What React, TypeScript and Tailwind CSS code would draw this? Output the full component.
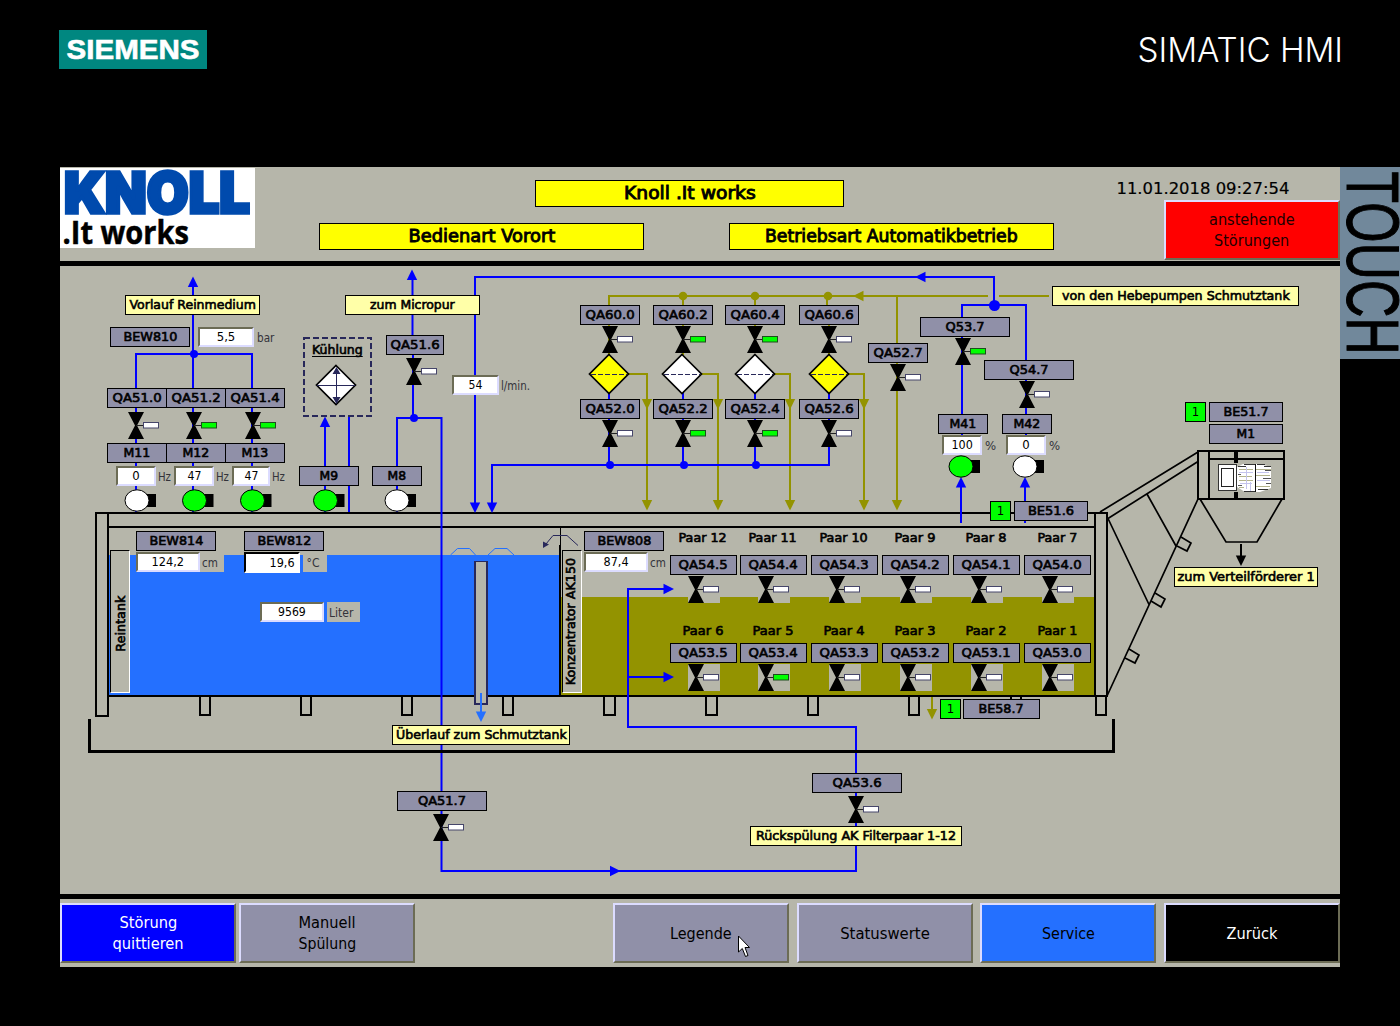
import { useLayoutEffect, useRef, useState, type ReactNode } from 'react';

const OX = 60;
const OY = 266;
const BLUE = '#0000ff';
const OLIVE = '#939300';
const NAVY = '#28285a';
const GREEN = '#00ff00';
const GREY = '#b6b6aa';

/** Text squeezed or stretched horizontally to a given width. */
function Fit({ w, children, className = '' }: { w?: number; children: string; className?: string }) {
  const ref = useRef<HTMLSpanElement>(null);
  const [k, setK] = useState(1);
  useLayoutEffect(() => {
    if (w && ref.current && ref.current.offsetWidth) setK(w / ref.current.offsetWidth);
  }, [w]);
  return (
    <span ref={ref} className={`inline-block shrink-0 whitespace-nowrap ${className}`} style={{ transform: `scaleX(${k})` }}>
      {children}
    </span>
  );
}

function At({ x, y, w, h, className = '', children }: { x: number; y: number; w: number; h: number; className?: string; children?: ReactNode }) {
  return (
    <div className={`absolute flex items-center justify-center ${className}`} style={{ left: x - OX, top: y - OY, width: w, height: h }}>
      {children}
    </div>
  );
}

type Box = [text: string, x: number, y: number, w: number, textWidth: number];

const TAGS: Box[] = [
  ['BEW810', 110, 327, 80, 54],
  ['QA51.0', 107, 388, 60, 49], ['QA51.2', 166, 388, 60, 49], ['QA51.4', 225, 388, 60, 49],
  ['M11', 107, 443, 60, 27], ['M12', 166, 443, 60, 27], ['M13', 225, 443, 60, 27],
  ['M9', 299, 466, 60, 19], ['QA51.6', 386, 335, 58, 49], ['M8', 372, 466, 50, 19],
  ['QA60.0', 580, 305, 60, 49], ['QA60.2', 653, 305, 60, 49], ['QA60.4', 725, 305, 60, 49], ['QA60.6', 799, 305, 60, 49],
  ['QA52.0', 580, 399, 60, 49], ['QA52.2', 653, 399, 60, 49], ['QA52.4', 725, 399, 60, 49], ['QA52.6', 799, 399, 60, 49],
  ['QA52.7', 868, 343, 60, 49], ['Q53.7', 920, 317, 90, 39], ['Q54.7', 984, 360, 90, 39],
  ['M41', 938, 414, 50, 27], ['M42', 1002, 414, 50, 27],
  ['BE51.6', 1014, 501, 74, 46], ['BE51.7', 1209, 402, 74, 45], ['M1', 1209, 424, 74, 19],
  ['BEW814', 136, 531, 80, 54], ['BEW812', 244, 531, 80, 54], ['BEW808', 584, 531, 80, 54],
  ['QA54.5', 670, 555, 67, 49], ['QA54.4', 740, 555, 67, 49], ['QA54.3', 811, 555, 67, 49],
  ['QA54.2', 882, 555, 67, 49], ['QA54.1', 953, 555, 67, 49], ['QA54.0', 1024, 555, 67, 49],
  ['QA53.5', 670, 643, 67, 49], ['QA53.4', 740, 643, 67, 49], ['QA53.3', 811, 643, 67, 49],
  ['QA53.2', 882, 643, 67, 49], ['QA53.1', 953, 643, 67, 49], ['QA53.0', 1024, 643, 67, 49],
  ['BE58.7', 963, 699, 77, 45], ['QA51.7', 397, 791, 90, 48], ['QA53.6', 812, 773, 90, 49],
];

const NOTES: Box[] = [
  ['Vorlauf Reinmedium', 125, 295, 135, 126],
  ['zum Micropur', 345, 295, 135, 85],
  ['von den Hebepumpen Schmutztank', 1052, 286, 247, 228],
  ['zum Verteilförderer 1', 1174, 567, 144, 137],
  ['Überlauf zum Schmutztank', 392, 725, 178, 171],
  ['Rückspülung AK Filterpaar 1-12', 750, 826, 212, 200],
];

const FIELDS: Box[] = [
  ['5,5', 198, 327, 56, 19], ['0', 116, 466, 40, 7], ['47', 174, 466, 40, 14], ['47', 232, 466, 38, 14],
  ['54', 452, 375, 47, 14], ['100', 942, 435, 40, 21], ['0', 1006, 435, 40, 7],
  ['124,2', 136, 552, 64, 32], ['9569', 260, 602, 64, 28], ['87,4', 584, 552, 64, 25],
];

// Unit texts: text, left edge, vertical centre, text width.
const UNITS: [string, number, number, number][] = [
  ['bar', 257, 338, 17], ['Hz', 158, 477, 13], ['Hz', 216, 477, 13], ['Hz', 272, 477, 13],
  ['l/min.', 501, 386, 29], ['%', 985, 446, 11], ['%', 1049, 446, 11],
  ['cm', 202, 563, 16], ['°C', 306, 563, 13], ['Liter', 329, 613, 24], ['cm', 650, 563, 16],
];

const PAIRS: [string, number, number, number][] = [
  ['Paar 12', 703, 538, 48], ['Paar 11', 773, 538, 48], ['Paar 10', 844, 538, 48], ['Paar 9', 915, 538, 41], ['Paar 8', 986, 538, 41], ['Paar 7', 1057, 538, 40],
  ['Paar 6', 703, 631, 41], ['Paar 5', 773, 631, 41], ['Paar 4', 844, 631, 41], ['Paar 3', 915, 631, 41], ['Paar 2', 986, 631, 41], ['Paar 1', 1057, 631, 40],
];

const VALVES: [x: number, y: number, on: boolean, patch?: boolean][] = [
  [136, 412, false], [194, 412, true], [253, 412, true], [414, 358, false],
  [610, 326, false], [683, 326, true], [755, 326, true], [829, 326, false],
  [610, 420, false], [683, 420, true], [755, 420, true], [829, 420, false],
  [898, 364, false], [963, 338, true], [1027, 381, false],
  [441, 814, false], [856, 796, false],
  [696, 576, false, true], [766, 576, false, true], [837, 576, false, true], [908, 576, false, true], [979, 576, false, true], [1050, 576, false, true],
  [696, 664, false, true], [766, 664, true, true], [837, 664, false, true], [908, 664, false, true], [979, 664, false, true], [1050, 664, false, true],
];

const MOTORS: [x: number, y: number, on: boolean][] = [
  [137, 500.5, false], [194.5, 500.5, true], [252.5, 500.5, true], [325.5, 500.5, true], [397, 500.5, false],
  [961, 466.5, true], [1025, 466.5, false],
];

function Valve({ x, y, on, patch }: { x: number; y: number; on: boolean; patch?: boolean }) {
  return (
    <g>
      {patch && <rect x={x - 8} y={y} width={32} height={27} fill={GREY} />}
      <path d={`M${x - 8} ${y}h16l-7 13.5l7 13.5h-16l7-13.5z`} fill="#000" />
      <path d={`M${x} ${y + 13.5}h8`} stroke="#222" strokeWidth={1} />
      <rect x={x + 7.5} y={y + 10.5} width={15} height={5.5} fill={on ? GREEN : '#fff'} stroke={on ? '#1d4d1d' : '#46466a'} strokeWidth={1} />
    </g>
  );
}

function Motor({ x, y, on }: { x: number; y: number; on: boolean }) {
  return (
    <g>
      <rect x={x + 9} y={y - 6.5} width={10} height={13} fill="#000" />
      <ellipse cx={x} cy={y} rx={12} ry={10.7} fill={on ? GREEN : '#fff'} stroke="#000" strokeWidth={1} />
    </g>
  );
}

function Head({ x, y, d, c = BLUE }: { x: number; y: number; d: 'u' | 'd' | 'l' | 'r'; c?: string }) {
  const a = { u: 0, r: 90, d: 180, l: 270 }[d];
  return <path d="M0 0L5.2 10.5H-5.2Z" fill={c} transform={`translate(${x} ${y}) rotate(${a})`} />;
}

function Schematic() {
  return (
    <svg className="absolute inset-0" width="1280" height="628" viewBox="60 266 1280 628" fill="none">
      {/* tank contents */}
      <rect x="109" y="555" width="451" height="140" fill="#2470ff" />
      <rect x="561" y="597" width="534" height="98" fill={OLIVE} />
      <path d="M450.500 555l7-6.500h12l6 6.500M488 555l7-6.500h12l7 6.500" stroke="#2470ff" />
      {/* tank frame */}
      <g stroke="#000" strokeWidth="2">
        <path d="M95 513H1108M108 527H1096M108 696H1106" />
        <path d="M96 513V716H108V513M1095 513V696M1107 513V697" />
        <path d="M200 697V715H210V697M301 697V715H311V697M402 697V715H412V697M503 697V715H513V697M604 697V715H615V697M706 697V715H717V697M808 697V715H818V697M909 697V715H919V697M1011 697V715H1021V697M1096 697V715H1106V697" />
        <path d="M560 545V696" />
        <path d="M560.500 527V545" strokeWidth="1" />
        <path d="M89.500 719V751.500H1113.500V719" strokeWidth="3" />
      </g>
      {/* overflow pipe */}
      <path d="M475 561V704H487V561Z" fill={GREY} />
      <path d="M475 561V704H487V561" stroke={NAVY} strokeWidth="2" />
      <path d="M474 561.500H488" stroke={NAVY} />
      <path d="M481 693V714" stroke="#2470ff" strokeWidth="2" />
      <Head x={481} y={722} d="d" c="#2470ff" />
      <path d="M578 545.500L567 535.500H553L546 544" stroke={NAVY} />
      <path d="M543 548V541.500L549 544.500Z" fill={NAVY} />

      {/* conveyor */}
      <g stroke="#000" strokeWidth="1.700">
        <path d="M1100 512L1198 452M1108 518.500L1198 461.500M1147 494L1176 546M1108 518.500L1149 604.500M1198 499L1107 696" />
        <path d="M1181 537L1191 543L1187 551L1177 546M1155 593L1165 599L1161 607L1151 601M1129 649L1139 655L1135 663L1125 658" />
        <path d="M1200 499L1226 542H1257L1282 499" />
        <path d="M1198 451H1284V499H1198ZM1209 451V499M1209 459H1284" strokeWidth="2" />
        <path d="M1236 451V463M1236 492V499" strokeWidth="4" />
        <path d="M1241 544V557" strokeWidth="2" />
      </g>
      <Head x={1241} y={566} d="d" c="#000" />
      <path d="M1237 467l6-3h17l11 3v21l-11 4h-15l-8-5z" fill="#fff" />
      <path d="M1238 466.500h8M1244 464.500h12M1257 464.500h8M1264 466.500h7M1244 491.500h12M1258 489.500h10" stroke="#333" />
      <path d="M1239 469.500h14M1256 469.500h15M1239 476.500h13M1256 475.500h14M1239 480.500h14M1256 486.500h14M1239 487.500h5" stroke="#b4b48c" />
      <path d="M1239 472.500h14M1240 483.500h12M1257 480.500h13M1257 472.500h12M1246.500 467v22M1250.500 482v9" stroke="#c4c4ec" />
      <path d="M1263 478.500h8M1266 483.500h5M1265 470.500h6M1238 474.500h3M1238 485.500h4" stroke="#555" />
      <path d="M1255.500 464V492" stroke="#111" />
      <rect x="1218.500" y="464.500" width="18" height="26" fill="#fff" stroke="#333" />
      <rect x="1221.500" y="468.500" width="12" height="18" fill="#fff" stroke="#222" />

      {/* olive piping */}
      <g stroke={OLIVE} strokeWidth="2">
        <path d="M609 305V296H988M999 296H1049M683 296V327M755 296V327M827 296V306M609 320V355M829 320V355M683 350V355M897 295V502" />
        <path d="M627 374H647V502M700 374H718V502M774 374H790V502M847 374H864V502" />
        <path d="M932 697V711" />
      </g>
      {[683, 755, 828].map((x) => <circle key={x} cx={x} cy={296} r={4.3} fill={OLIVE} />)}
      <Head x={853} y={296} d="l" c={OLIVE} />
      {[647, 718, 790, 864].map((x) => <Head key={x} x={x} y={409.5} d="d" c={OLIVE} />)}
      {[647, 718, 790, 864, 897].map((x) => <Head key={x} x={x} y={510.5} d="d" c={OLIVE} />)}
      <Head x={932} y={719.5} d="d" c={OLIVE} />

      {/* blue piping */}
      <g stroke={BLUE} strokeWidth="2">
        <path d="M193 285V512M136 512V354H252V512" />
        <path d="M325 425V512M349 417V512" />
        <path d="M412.500 277V335M413 335V418M397 512V418H441.500V871H856V727H628V589H666M628 677H666" />
        <path d="M475 503V277H994V305M962 418V305H1026V418M961 487V523M1025 487V523M962 430V440M1026 430V440" />
        <path d="M492 503V465H829V392M609 392V465M683 392V465M755 392V465" />
      </g>
      <circle cx="194" cy="354" r="4" fill={BLUE} />
      <circle cx="414" cy="418" r="4" fill={BLUE} />
      <circle cx="994.500" cy="305.500" r="5.500" fill={BLUE} />
      {[610, 684, 756].map((x) => <circle key={x} cx={x} cy={465} r={4} fill={BLUE} />)}
      <Head x={193} y={276.5} d="u" />
      <Head x={412} y={269.5} d="u" />
      <Head x={325} y={416.5} d="u" />
      <Head x={475} y={513} d="d" />
      <Head x={492} y={513} d="d" />
      <Head x={915} y={277} d="l" />
      <Head x={961} y={477} d="u" />
      <Head x={1025} y={477} d="u" />
      <Head x={674} y={589} d="r" />
      <Head x={674} y={677} d="r" />
      <Head x={620.5} y={871} d="r" />
      <path d="M88 751.500H1115" stroke="#000" strokeWidth="3" />

      {/* filters */}
      {([[609, true], [682, false], [755, false], [829, true]] as [number, boolean][]).map(([x, dirty]) => (
        <g key={x}>
          <path d={`M${x} 354.500L${x + 19.5} 374L${x} 393.500L${x - 19.5} 374Z`} fill={dirty ? '#ffff00' : '#fff'} stroke="#000" strokeWidth="1.700" />
          <path d={`M${x - 18} 374.500H${x + 18}`} stroke={NAVY} strokeDasharray="5 2" />
        </g>
      ))}

      {/* cooler */}
      <rect x="304" y="338" width="67" height="78" stroke={NAVY} strokeWidth="2" strokeDasharray="6 3" />
      <path d="M336 365.500L355.500 385L336 404.500L316.500 385Z" fill="#fff" stroke="#000" strokeWidth="1.700" />
      <path d="M317 385.500H355M336.500 368V403" stroke={NAVY} />
      <path d="M336.500 367L340.500 374H332.500ZM336.500 404L340.500 397H332.500Z" fill={NAVY} />

      {VALVES.map(([x, y, on, patch]) => <Valve key={`${x}-${y}`} x={x} y={y} on={on} patch={patch} />)}
      {MOTORS.map(([x, y, on]) => <Motor key={`${x}-${y}`} x={x} y={y} on={on} />)}
    </svg>
  );
}

const HEAVY = "font-['DejaVu_Sans'] text-[13px] [-webkit-text-stroke:0.65px_black]";
const TAG = `border border-black bg-[#9090a8] ${HEAVY}`;
const FIELD = 'border-2 border-t-[#6c6c55] border-l-[#6c6c55] border-r-[#dcdcff] border-b-[#dcdcff] bg-white text-[13px]';
const NOTE = `border border-black bg-[#ffffa8] ${HEAVY}`;
const BANNER = "flex h-[27px] items-center justify-center border border-black bg-[#ffff00] pt-px font-['DejaVu_Sans'] text-[17px] [-webkit-text-stroke:0.9px_black]";
const BUTTON = 'flex h-[60px] w-[176px] shrink-0 flex-col items-center justify-center border-2 border-t-[#dcdcff] border-l-[#dcdcff] border-r-[#6c6c55] border-b-[#6c6c55] text-[16.5px] leading-[21px]';

function Header() {
  return (
    <header className="flex h-[94px]">
      <div className="mt-px flex h-[80px] w-[195px] shrink-0 flex-col bg-white">
        <div className="flex h-[48px] items-center justify-center pt-px pr-[2px] font-['Inter'] text-[57px] leading-[48px] font-black text-[#004aad] [-webkit-text-stroke:3.5px_#004aad]">
          <Fit w={186}>KNOLL</Fit>
        </div>
        <div className="flex h-[32px] w-[132px] items-center justify-center font-['Open_Sans'] text-[32px] leading-[34px] font-bold [-webkit-text-stroke:0.5px_black]">
          <Fit w={126}>.It works</Fit>
        </div>
      </div>
      <div className="ml-[64px] flex w-[735px] shrink-0 flex-col gap-4 pt-[13px]">
        <div className={`ml-[216px] w-[309px] ${BANNER}`}><Fit w={132}>Knoll .It works</Fit></div>
        <div className="flex justify-between">
          <div className={`w-[325px] ${BANNER}`}><Fit w={147}>Bedienart Vorort</Fit></div>
          <div className={`w-[325px] ${BANNER}`}><Fit w={253}>Betriebsart Automatikbetrieb</Fit></div>
        </div>
      </div>
      <div className="flex flex-1 flex-col items-end">
        <div className="mr-[52px] flex h-[33px] w-[171px] items-center justify-center pt-[12px] font-['DejaVu_Sans'] text-[16.5px] [-webkit-text-stroke:0.2px_black]">
          <Fit w={173}>11.01.2018 09:27:54</Fit>
        </div>
        <button className={`bg-[#ff0000] text-[#200000] ${BUTTON}`}>
          <Fit w={86}>anstehende</Fit>
          <Fit w={75}>Störungen</Fit>
        </button>
      </div>
    </header>
  );
}

function Process() {
  return (
    <main className="relative h-[628px]">
      <Schematic />
      {TAGS.map(([t, x, y, w, tw]) => (
        <At key={t} x={x} y={y} w={w} h={20} className={TAG}><Fit w={tw}>{t}</Fit></At>
      ))}
      {NOTES.map(([t, x, y, w, tw]) => (
        <At key={t} x={x} y={y} w={w} h={20} className={NOTE}><Fit w={tw}>{t}</Fit></At>
      ))}
      {FIELDS.map(([t, x, y, w, tw]) => (
        <At key={`${x}-${y}`} x={x} y={y} w={w} h={20} className={FIELD}><Fit w={tw}>{t}</Fit></At>
      ))}
      <At x={244} y={552} w={56} h={21} className="border-2 border-t-black border-l-black border-r-white border-b-white bg-white pl-[20px] text-[13px]"><Fit w={25}>19,6</Fit></At>
      <At x={200} y={552} w={24} h={20} className="bg-[#b6b6aa]" />
      <At x={303} y={552} w={24} h={20} className="bg-[#b6b6aa]" />
      <At x={327} y={602} w={33} h={20} className="bg-[#b6b6aa]" />
      {UNITS.map(([t, x, y, w]) => (
        <At key={`${x}-${y}`} x={x} y={y - 10} w={w} h={19} className="text-[13px] text-[#33333a]"><Fit w={w}>{t}</Fit></At>
      ))}
      {PAIRS.map(([t, x, y, w]) => (
        <At key={t} x={x - 30} y={y - 10} w={60} h={20} className={HEAVY}><Fit w={w}>{t}</Fit></At>
      ))}
      {[[990, 501], [940, 699], [1185, 402]].map(([x, y]) => (
        <At key={x} x={x} y={y} w={21} h={20} className="border border-black bg-[#00ff00] text-[13px]"><Fit>1</Fit></At>
      ))}
      <At x={307} y={340} w={61} h={20} className={HEAVY}><Fit w={51} className="underline underline-offset-2">Kühlung</Fit></At>
      <At x={110} y={550} w={20} h={143} className="border border-t-black border-l-black border-r-white border-b-white bg-[#b6b6aa]">
        <div className={`flex w-0 shrink-0 -rotate-90 items-center justify-center pr-[3px] ${HEAVY}`}><Fit w={56}>Reintank</Fit></div>
      </At>
      <At x={562} y={550} w={20} h={143} className="border border-t-black border-l-black border-r-white border-b-white bg-[#b6b6aa]">
        <div className={`flex w-0 shrink-0 -rotate-90 items-center justify-center pb-[2px] ${HEAVY}`}><Fit w={127}>Konzentrator AK150</Fit></div>
      </At>
    </main>
  );
}

function Footer() {
  return (
    <footer className="flex h-[68px] pt-[4px]">
      <button className={`bg-[#0000ff] text-white ${BUTTON}`}><Fit w={58}>Störung</Fit><Fit w={71}>quittieren</Fit></button>
      <button className={`ml-[3px] bg-[#9090a8] ${BUTTON}`}><Fit w={57}>Manuell</Fit><Fit w={58}>Spülung</Fit></button>
      <button className={`relative ml-[198px] bg-[#9090a8] ${BUTTON}`}>
        <Fit w={62}>Legende</Fit>
        <svg className="absolute top-[30px] left-[123px]" width="13" height="23" viewBox="0 0 13 23">
          <path d="M.5 1V17L4.300 13.500L7.500 21.500L10 20.500L7 12.500H11.500Z" fill="#fff" stroke="#000" />
        </svg>
      </button>
      <button className={`ml-[8px] bg-[#9090a8] ${BUTTON}`}><Fit w={90}>Statuswerte</Fit></button>
      <button className={`ml-[7px] bg-[#2470ff] ${BUTTON}`}><Fit w={53}>Service</Fit></button>
      <button className={`ml-[8px] bg-black text-white ${BUTTON}`}><Fit w={51}>Zurück</Fit></button>
    </footer>
  );
}

export default function App() {
  return (
    <div className="h-[1026px] w-[1400px] overflow-hidden bg-black font-['DejaVu_Sans_Condensed','DejaVu_Sans',sans-serif] text-black">
      <div className="flex h-[167px] items-start justify-between pr-[57px] pl-[59px]">
        <div className="mt-[30px] flex h-[39px] w-[148px] items-center justify-center bg-[#008780] font-['Liberation_Sans'] text-[28px] font-bold text-white [-webkit-text-stroke:0.6px_white]">
          <Fit w={133}>SIEMENS</Fit>
        </div>
        <div className="mt-[28px] flex h-[42px] w-[205px] items-center justify-center font-['Inter'] text-[34px] font-light text-white">
          <Fit w={206}>SIMATIC HMI</Fit>
        </div>
      </div>
      <div className="flex">
        <div className="ml-[60px] flex h-[800px] w-[1280px] shrink-0 flex-col bg-[#b6b6aa]">
          <Header />
          <div className="h-[5px] bg-black" />
          <Process />
          <div className="h-[5px] bg-black" />
          <Footer />
        </div>
        <div className="flex h-[192px] w-[60px] shrink-0 items-center justify-center bg-[#71889b] font-['Liberation_Sans'] text-[75px] leading-none [-webkit-text-stroke:1px_black]">
          <div className="flex w-0 rotate-90 items-center justify-center pb-[4px]"><Fit w={183}>TOUCH</Fit></div>
        </div>
      </div>
    </div>
  );
}
